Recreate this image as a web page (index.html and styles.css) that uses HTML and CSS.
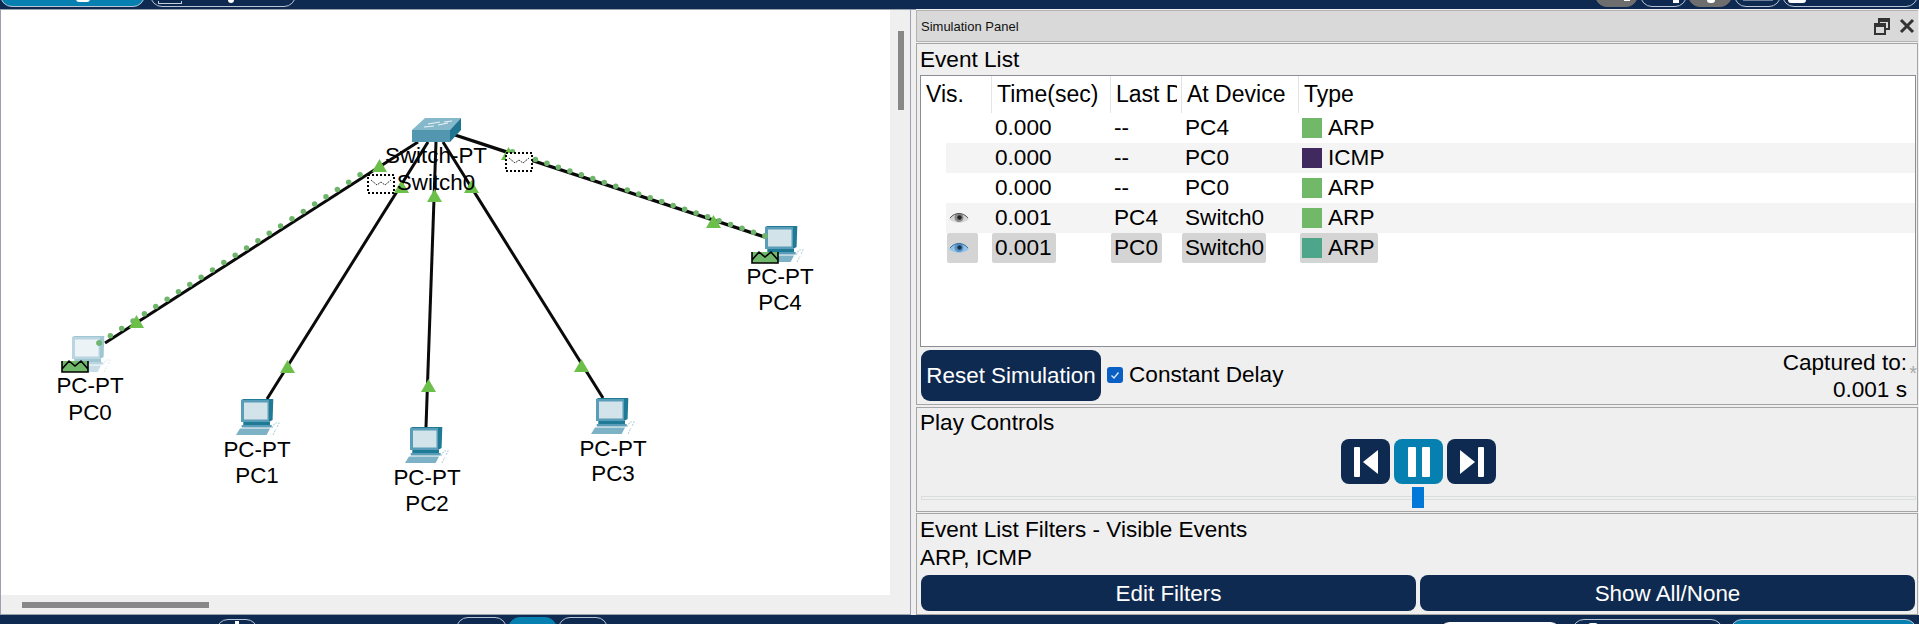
FILE: index.html
```html
<!DOCTYPE html>
<html lang="en">
<head>
<meta charset="utf-8">
<title>Simulation Panel</title>
<link rel="stylesheet" href="styles.css">
</head>
<body>
<header class="topbar">
  <div class="pill-group">
    <span class="pill pill-active w145"><i class="bit bit-a"></i></span>
    <span class="pill w146"><i class="bit bit-b"></i><i class="bit bit-c"></i></span>
  </div>
  <div class="pill-group tight">
    <span class="pill pill-gray w43"><i class="bit bit-d"></i></span>
    <span class="pill w47"><i class="bit bit-e"></i></span>
    <span class="pill pill-gray w44"><i class="bit bit-f"></i></span>
    <span class="pill w47"><i class="bit bit-g"></i></span>
    <span class="pill w136"><i class="bit bit-h"></i></span>
  </div>
</header>

<main class="main">
  <section class="workspace">
    <div class="canvas">
      <svg class="diagram" width="889" height="585" viewBox="1 10 889 585">
        <defs>
          <symbol id="pc" viewBox="0 0 44 36" overflow="visible">
            <polygon class="pc-side" points="5,1 7.5,0 37.3,0 36.6,21 33,23 33,1"/>
            <rect class="pc-front" x="5" y="1" width="28" height="22"/>
            <rect class="pc-screen" x="8" y="3.5" width="23.5" height="17"/>
            <rect class="pc-side" x="7.3" y="23" width="26.7" height="3"/>
            <rect class="pc-front" x="5.7" y="26" width="30" height="2.5"/>
            <polygon class="pc-base" points="0,36 4,29.5 34,29.5 30.7,36"/>
            <path class="pc-cable" d="M36 29l3-5h4l-2 4M37 36l3-6"/>
          </symbol>
          <symbol id="mail" viewBox="0 0 28 12" overflow="visible">
            <polygon class="mail-fill" points="1,0 27,0 27,11 1,11"/>
            <path class="mail-line" d="M1 0v11h26V0M1 8l7-8 6 5 6-5 7 8"/>
          </symbol>
          <symbol id="ghost" viewBox="0 0 28 20" overflow="visible">
            <rect class="ghost-box" x="1" y="1" width="26" height="18"/>
            <path class="ghost-flap" d="M4 6l6 5 4-3 4 3 6-5"/>
          </symbol>
          <symbol id="tri" viewBox="0 0 15 13"><polygon class="tri" points="7.5,0 15,13 0,13"/></symbol>
        </defs>

        <line class="link" x1="418" y1="142" x2="105" y2="343"/>
        <line class="link" x1="428" y1="142" x2="267" y2="399"/>
        <line class="link" x1="436" y1="142" x2="426" y2="427"/>
        <line class="link" x1="443" y1="142" x2="603" y2="398"/>
        <line class="link thick" x1="455" y1="135" x2="765" y2="237"/>

        <line class="dots" x1="99" y1="343" x2="366" y2="171"/>
        <line class="dots dots-b" x1="765" y1="236" x2="501" y2="148"/>

        <polygon class="sw-top" points="412,130 425,118 461,118 450,130"/>
        <polygon class="sw-front" points="412,130 450,130 450,142 412,142"/>
        <polygon class="sw-side" points="450,130 461,118 461,130 450,142"/>
        <path class="sw-mark" d="M428 124l12-2M444 122l8-1M424 127l10-1M438 125l10-2"/>

        <use href="#pc" class="faded" x="67" y="336" width="44" height="36"/>
        <use href="#pc" x="236" y="399" width="44" height="36"/>
        <use href="#pc" x="405" y="427" width="44" height="36"/>
        <use href="#pc" x="591" y="398" width="44" height="36"/>
        <use href="#pc" x="760" y="226" width="44" height="36"/>

        <use href="#mail" x="61" y="361" width="28" height="12"/>
        <use href="#mail" x="751" y="252" width="28" height="12"/>
        <circle class="dot-end" cx="99" cy="343" r="2.75"/>
        <circle class="dot-end" cx="765" cy="236" r="2.75"/>

        <use href="#tri" x="372" y="159" width="15" height="13"/>
        <use href="#tri" x="394" y="180" width="15" height="13"/>
        <use href="#tri" x="427" y="189" width="15" height="13"/>
        <use href="#tri" x="464" y="180" width="15" height="13"/>
        <use href="#tri" x="501" y="147" width="15" height="13"/>
        <use href="#tri" x="706" y="215" width="15" height="13"/>
        <use href="#tri" x="129" y="315" width="15" height="13"/>
        <use href="#tri" x="280" y="360" width="15" height="13"/>
        <use href="#tri" x="421" y="379" width="15" height="13"/>
        <use href="#tri" x="574" y="359" width="15" height="13"/>

        <use href="#ghost" x="367" y="174" width="28" height="20"/>
        <use href="#ghost" x="505" y="152" width="28" height="20"/>

        <text class="node" x="436" y="163">Switch-PT</text>
        <text class="node" x="436" y="190">Switch0</text>
        <text class="node" x="90" y="393">PC-PT</text>
        <text class="node" x="90" y="420">PC0</text>
        <text class="node" x="257" y="457">PC-PT</text>
        <text class="node" x="257" y="483">PC1</text>
        <text class="node" x="427" y="485">PC-PT</text>
        <text class="node" x="427" y="511">PC2</text>
        <text class="node" x="613" y="456">PC-PT</text>
        <text class="node" x="613" y="481">PC3</text>
        <text class="node" x="780" y="284">PC-PT</text>
        <text class="node" x="780" y="310">PC4</text>
      </svg>
      <div class="vscroll"><div class="vthumb"></div></div>
      <div class="hscroll"><div class="hthumb"></div></div>
    </div>
  </section>

  <aside class="panel">
    <div class="panel-title">
      <span>Simulation Panel</span>
      <div class="win-icons">
        <svg class="win-icon" width="16" height="17" viewBox="0 0 16 17"><path d="M5 5V1h10v10h-4M1 6h10v10H1zM1 8h10M5 3h10"/></svg>
        <svg class="win-icon close" width="16" height="16" viewBox="0 0 16 16"><path d="M2 2l12 12M14 2L2 14"/></svg>
      </div>
    </div>

    <section class="sect sect-events">
      <h2 class="heading">Event List</h2>
      <div class="list">
        <div class="list-head">
          <div class="hcell pad-vis">Vis.</div>
          <div class="hcell pad-time">Time(sec)</div>
          <div class="hcell pad-last">Last Device</div>
          <div class="hcell pad-at">At Device</div>
          <div class="hcell pad-type">Type</div>
        </div>
        <div class="row">
          <span class="cell c-vis"></span><span class="cell c-time">0.000</span><span class="cell c-last">--</span><span class="cell c-at">PC4</span>
          <span class="cell c-type"><i class="sq sq-arp"></i>ARP</span>
        </div>
        <div class="row stripe">
          <span class="cell c-vis"></span><span class="cell c-time">0.000</span><span class="cell c-last">--</span><span class="cell c-at">PC0</span>
          <span class="cell c-type"><i class="sq sq-icmp"></i>ICMP</span>
        </div>
        <div class="row">
          <span class="cell c-vis"></span><span class="cell c-time">0.000</span><span class="cell c-last">--</span><span class="cell c-at">PC0</span>
          <span class="cell c-type"><i class="sq sq-arp"></i>ARP</span>
        </div>
        <div class="row stripe">
          <span class="cell c-vis">
            <svg class="eye" width="20" height="14" viewBox="0 0 20 14"><path class="eye-w" d="M0 8C5 0 15 0 20 8C14 13 6 13 0 8z"/><circle class="eye-i" cx="10" cy="6.5" r="4.5"/><circle class="eye-p" cx="10.5" cy="6.5" r="2.2"/><path class="eye-l" d="M1 7C6 1 14 1 19 7"/></svg>
          </span>
          <span class="cell c-time">0.001</span><span class="cell c-last">PC4</span><span class="cell c-at">Switch0</span>
          <span class="cell c-type"><i class="sq sq-arp"></i>ARP</span>
        </div>
        <div class="row selected">
          <span class="cell c-vis">
            <svg class="eye" width="20" height="14" viewBox="0 0 20 14"><path class="eye-wb" d="M0 8C5 0 15 0 20 8C14 13 6 13 0 8z"/><circle class="eye-ib" cx="10" cy="6.5" r="4.5"/><circle class="eye-pb" cx="10.5" cy="6.5" r="2.2"/><path class="eye-lb" d="M1 7C6 1 14 1 19 7"/></svg>
          </span>
          <span class="cell c-time">0.001</span><span class="cell c-last">PC0</span><span class="cell c-at">Switch0</span>
          <span class="cell c-type"><i class="sq sq-sel"></i>ARP</span>
        </div>
      </div>
      <div class="reset-row">
        <button class="btn btn-reset">Reset Simulation</button>
        <label class="check">
          <svg class="checkbox" width="16" height="16" viewBox="0 0 16 16"><rect class="cb-box" width="16" height="16" rx="3"/><path class="cb-tick" d="M4.5 8.5l2.5 2.5 4.5-5.5"/></svg>
          Constant Delay
        </label>
        <div class="captured">Captured to:<br>0.001 s<span class="star">*</span></div>
      </div>
    </section>

    <section class="sect sect-play">
      <h2 class="heading heading-play">Play Controls</h2>
      <div class="play-btns">
        <button class="play"><svg class="play-ic" width="24" height="30" viewBox="0 0 24 30"><rect x="0" y="0" width="6" height="30" rx="1"/><polygon points="24,3 24,27 9,15"/></svg></button>
        <button class="play play-on"><svg class="play-ic" width="24" height="30" viewBox="0 0 24 30"><rect x="1" y="0" width="8" height="30" rx="1"/><rect x="15" y="0" width="8" height="30" rx="1"/></svg></button>
        <button class="play"><svg class="play-ic" width="24" height="30" viewBox="0 0 24 30"><polygon points="0,3 0,27 15,15"/><rect x="18" y="0" width="6" height="30" rx="1"/></svg></button>
      </div>
      <div class="slider"><div class="track"></div><div class="thumb"></div></div>
    </section>

    <section class="sect sect-filters">
      <div class="filter-line">Event List Filters - Visible Events</div>
      <div class="filter-line">ARP, ICMP</div>
      <div class="filter-btns">
        <button class="btn btn-wide">Edit Filters</button>
        <button class="btn btn-wide">Show All/None</button>
      </div>
    </section>
  </aside>
</main>

<footer class="bottombar">
  <span class="pill-b b-tab"><i class="bit bit-i"></i></span>
  <span class="pill-b b-one"></span>
  <span class="pill-b b-two"></span>
  <span class="pill-b b-three"></span>
  <span class="pill-b b-white"></span>
  <span class="pill-b b-four"><i class="bit bit-j"></i></span>
  <span class="pill-b b-five"></span>
</footer>
</body>
</html>
```

FILE: styles.css
```css
* { box-sizing: border-box; }
html, body { margin: 0; padding: 0; }
body {
  width: 1919px;
  height: 624px;
  overflow: hidden;
  display: flex;
  flex-direction: column;
  background: #0f2a50;
  font-family: "Liberation Sans", Arial, sans-serif;
  color: #000;
}

/* top bar */
.topbar {
  height: 9px;
  flex: none;
  display: flex;
  justify-content: space-between;
  align-items: flex-end;
  padding: 0 1px 2px 0;
  overflow: hidden;
  background: #0f2a50;
}
.pill-group { display: flex; gap: 5px; }
.pill-group.tight { gap: 1.5px; }
.pill {
  position: relative;
  display: block;
  height: 20px;
  border: 1px solid #b9c4d4;
  border-radius: 0 0 12px 12px;
  background: #0f2a50;
}
.pill-active { background: #0580b0; border-color: #b9c4d4; }
.pill-gray { background: #6e6e6e; border-color: #6e6e6e; }
.w145 { width: 145px; }
.w146 { width: 146px; }
.w43 { width: 43px; }
.w44 { width: 44px; }
.w47 { width: 47px; }
.w136 { width: 136px; }
.bit { position: absolute; display: block; background: #fff; }
.bit-a { left: 75px; bottom: 4px; width: 14px; height: 3px; border-radius: 0 0 6px 6px; }
.bit-b { left: 7px; bottom: 2px; width: 24px; height: 3px; background: #0f2a50; border: 1px solid #c8d0dc; border-top: 0; }
.bit-c { left: 77px; bottom: 3px; width: 6px; height: 3px; border-radius: 0 0 3px 3px; }
.bit-d { left: 28px; bottom: 5px; width: 6px; height: 2px; }
.bit-e { left: 32px; bottom: 3px; width: 6px; height: 4px; }
.bit-f { left: 18px; bottom: 3px; width: 8px; height: 3px; border-radius: 0 0 4px 4px; }
.bit-g { left: 8px; bottom: 5px; width: 30px; height: 1px; background: #6d7f99; }
.bit-h { left: 5px; bottom: 3px; width: 18px; height: 3px; border-radius: 0 0 9px 9px; }

/* main */
.main {
  height: 606px;
  flex: none;
  display: flex;
  background: #efefef;
}
.workspace {
  width: 916px;
  flex: none;
  background: #efefef;
  box-shadow: inset 0 1px 0 #8e97a8;
}
.canvas {
  width: 911px;
  height: 606px;
  display: grid;
  grid-template-columns: 889px 21px;
  grid-template-rows: 585px 1fr;
  border: 1px solid #9aa0ae;
  background: #efefef;
}
.diagram { display: block; background: #fff; }
.vscroll { padding: 21px 0 0 8px; }
.vthumb { width: 6px; height: 79px; background: #888; }
.hscroll { grid-column: 1 / 3; padding: 7px 0 0 21px; }
.hthumb { width: 187px; height: 6px; background: #888; }

/* diagram */
.link { stroke: #0a0a0a; stroke-width: 3; }
.link.thick { stroke-width: 3.4; }
.dots { stroke: #6fb56c; stroke-width: 5.5; stroke-linecap: round; stroke-dasharray: 0 13.5; }
.dots-b { stroke-dasharray: 0 12.1; }
.dot-end { fill: #6fb56c; }
.tri { fill: #6cc04a; }
.sw-top { fill: #86b8cc; }
.sw-front { fill: #5296b0; }
.sw-side { fill: #1f7590; }
.sw-mark { fill: none; stroke: #e8f2f6; stroke-width: 1.2; }
.pc-side { fill: #1f7a96; }
.pc-front { fill: #5a9db8; }
.pc-screen { fill: #d2e3ea; }
.pc-base { fill: #7db2c6; }
.pc-cable { fill: none; stroke: #b9d4df; stroke-width: 1.2; stroke-dasharray: 2 1; }
.faded { opacity: .42; }
.mail-fill { fill: #70b86a; }
.mail-line { fill: none; stroke: #000; stroke-width: 1.6; }
.ghost-box { fill: #fff; stroke: #000; stroke-width: 2; stroke-dasharray: 2 2; }
.ghost-flap { fill: none; stroke: #333; stroke-width: 1; stroke-dasharray: 2 1; }
.node {
  font-family: "Liberation Sans", Arial, sans-serif;
  font-size: 22.4px;
  text-anchor: middle;
  fill: #000;
}

/* panel */
.panel {
  width: 1002px;
  flex: none;
  display: flex;
  flex-direction: column;
  padding-top: 1px;
  background: #efefef;
}
.panel-title {
  height: 32px;
  flex: none;
  display: flex;
  align-items: center;
  justify-content: space-between;
  padding: 0 3px 0 4px;
  background: #d9d9d9;
  border: 1px solid #b3b3b3;
  border-right: 0;
  font-size: 13px;
  color: #111;
}
.win-icons { display: flex; align-items: center; gap: 9px; }
.win-icon { display: block; fill: none; stroke: #333; stroke-width: 2; }
.win-icon.close { stroke-width: 3; }
.sect {
  flex: none;
  border: 1px solid #a5a5a5;
  background: #efefef;
}
.sect-events { height: 362px; margin-top: 1px; padding: 0 1px 0 3px; }
.sect-play { height: 105px; margin-top: 2px; }
.sect-filters { flex: 1; margin-top: 1px; padding: 2px 2px 0 4px; }
.heading {
  margin: 0;
  font-size: 22.6px;
  font-weight: 400;
  line-height: 31px;
}
.list {
  height: 272px;
  border: 1px solid #8c8c94;
  background: #fff;
  font-size: 22.6px;
}
.list-head {
  height: 37px;
  display: grid;
  grid-template-columns: 70px 119px 71px 117px 1fr;
  font-size: 23px;
}
.hcell {
  line-height: 37px;
  white-space: nowrap;
  overflow: hidden;
  border-left: 1px solid #e4e4e4;
}
.pad-vis { padding-left: 5px; border-left: 0; }
.pad-time { padding-left: 5px; }
.pad-last { padding-left: 5px; margin-right: 4px; }
.pad-at { padding-left: 5px; }
.pad-type { padding-left: 5px; }
.row {
  height: 30px;
  margin-left: 25px;
  display: grid;
  grid-template-columns: 45px 119px 71px 117px 1fr;
  align-items: stretch;
  justify-items: start;
}
.stripe { background: #f4f4f4; }
.cell {
  display: flex;
  align-items: center;
  line-height: 30px;
  white-space: nowrap;
}
.c-vis { width: 31px; margin-left: 1px; padding-left: 2px; }
.c-time { margin-left: 1px; padding: 0 4px 0 3px; }
.c-last { margin-left: 1px; padding: 0 4px 0 3px; }
.c-at { margin-left: 1px; padding: 0 2px 0 3px; }
.c-type { margin-left: 2px; padding: 0 4px 0 2px; gap: 6px; }
.selected .cell { background: #d4d4d4; border-radius: 2px; }
.sq { display: block; width: 20px; height: 20px; }
.sq-arp { background: #71b968; }
.sq-icmp { background: #40295f; }
.sq-sel { background: #4da58a; }
.eye { display: block; }
.eye-w { fill: #d6d6d6; }
.eye-i { fill: #8a8a8a; }
.eye-p { fill: #222; }
.eye-l { fill: none; stroke: #555; stroke-width: 1; }
.eye-wb { fill: #93c3e8; }
.eye-ib { fill: #5a92c4; }
.eye-pb { fill: #16324e; }
.eye-lb { fill: none; stroke: #3a6f9e; stroke-width: 1; }

.reset-row {
  height: 51px;
  margin-top: 3px;
  display: flex;
  align-items: flex-start;
  position: relative;
  padding-left: 1px;
}
.btn {
  border: 0;
  padding: 0;
  background: #0f2a50;
  color: #fff;
  font: 400 22.4px "Liberation Sans", Arial, sans-serif;
  border-radius: 8px;
}
.btn-reset { width: 180px; height: 51px; border-radius: 9px; }
.check {
  display: flex;
  align-items: center;
  gap: 6px;
  height: 50px;
  margin-left: 6px;
  font-size: 22.6px;
}
.checkbox { display: block; flex: none; }
.cb-box { fill: #0a5fc4; }
.cb-tick { fill: none; stroke: #d8e8fa; stroke-width: 1.4; }
.captured {
  margin-left: auto;
  margin-right: 9px;
  margin-top: -1px;
  font-size: 22.6px;
  line-height: 27px;
  text-align: right;
  position: relative;
}
.star {
  position: absolute;
  top: 11px;
  right: -10px;
  color: #aaa;
  font-size: 20px;
  line-height: 27px;
}

.heading-play { padding-left: 3px; line-height: 30px; }
.play-btns {
  display: flex;
  justify-content: center;
  gap: 4px;
  margin-top: 1px;
  padding-left: 3px;
}
.play {
  width: 49px;
  height: 45px;
  border: 0;
  padding: 0;
  border-radius: 8px;
  background: #0f2a50;
  display: flex;
  align-items: center;
  justify-content: center;
}
.play-on { background: #0580b0; }
.play-ic { display: block; fill: #fff; }
.slider {
  position: relative;
  height: 21px;
  margin: 3px 1px 0 4px;
  display: flex;
  align-items: center;
}
.track { width: 100%; height: 4px; background: #efefef; border: 1px solid #d9dddc; }
.thumb {
  position: absolute;
  left: 491px;
  top: 0;
  width: 12px;
  height: 21px;
  background: #0078d7;
}

.filter-line { font-size: 22.5px; line-height: 28px; margin-left: -1px; }
.filter-btns { display: flex; gap: 4px; margin-top: 3px; }
.btn-wide { flex: 1; height: 36px; padding-top: 1px; }

/* bottom bar */
.bottombar {
  height: 9px;
  flex: none;
  display: flex;
  align-items: flex-start;
  overflow: hidden;
  background: #0f2a50;
}
.pill-b {
  position: relative;
  display: block;
  height: 20px;
  border: 1px solid #b9c4d4;
  border-radius: 12px 12px 0 0;
  background: #0f2a50;
}
.b-tab { width: 42px; margin: 4px 0 0 216px; }
.b-one { width: 51px; margin: 2px 0 0 198px; }
.b-two { width: 49px; margin: 2px 0 0 1px; background: #0580b0; border-color: #0580b0; }
.b-three { width: 50px; margin: 2px 0 0 1px; }
.b-white { width: 124px; margin: 7px 0 0 830px; background: #fff; border-color: #fff; }
.b-four { width: 151px; margin: 4px 0 0 10px; }
.b-five { width: 187px; margin: 4px 0 0 7px; background: #0580b0; border-color: #b9c4d4; }
.bit-i { left: 18px; top: 1px; width: 4px; height: 3px; }
.bit-j { left: 15px; top: 3px; width: 10px; height: 3px; border-radius: 5px 5px 0 0; }
```
